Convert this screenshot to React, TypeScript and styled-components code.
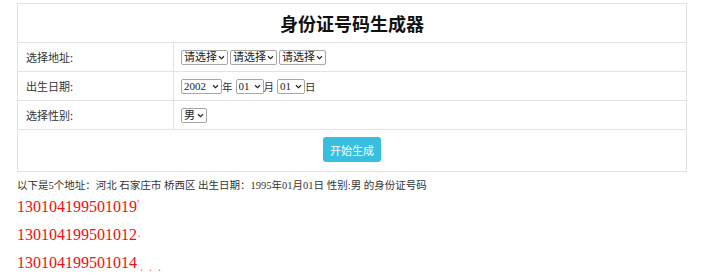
import styled, { createGlobalStyle } from 'styled-components';

const GlobalStyle = createGlobalStyle`
    html, body {
        margin: 0;
        padding: 0;
        background: #fff;
    }

    body {
        font-family: "Liberation Serif", "Noto Sans CJK SC", serif;
        color: #333;
    }
`;

const provinces = ['请选择'];
const years = ['2002'];
const days = ['01'];

const Chevron: React.FC = () => (
    <ChevronIcon viewBox="0 0 8 6" aria-hidden>
        <path d="M1 1.5 L4 4.5 L7 1.5" fill="none" stroke="#222" strokeWidth="1.4" />
    </ChevronIcon>
);

const Picker: React.FC<{ options: string[]; width: number }> = ({ options, width }) => (
    <PickerWrap $width={width}>
        <Select defaultValue={options[0]}>
            {options.map((o) => (
                <option key={o}>{o}</option>
            ))}
        </Select>
        <Chevron />
    </PickerWrap>
);

const App: React.FC = () => {
    return (
        <>
            <GlobalStyle />
            <Page>
                <FormTable>
                    <tbody>
                        <tr>
                            <TitleCell colSpan={2}>身份证号码生成器</TitleCell>
                        </tr>
                        <tr>
                            <LabelCell>选择地址:</LabelCell>
                            <FieldCell>
                                <Fields>
                                    <Picker options={provinces} width={47} />
                                    <Picker options={provinces} width={47} />
                                    <Picker options={provinces} width={47} />
                                </Fields>
                            </FieldCell>
                        </tr>
                        <tr>
                            <LabelCell>出生日期:</LabelCell>
                            <FieldCell>
                                <Fields>
                                    <Picker options={years} width={41} />
                                    <Unit>年</Unit>
                                    <Picker options={days} width={28} />
                                    <Unit>月</Unit>
                                    <Picker options={days} width={28} />
                                    <Unit>日</Unit>
                                </Fields>
                            </FieldCell>
                        </tr>
                        <tr>
                            <LabelCell>选择性别:</LabelCell>
                            <FieldCell>
                                <Fields>
                                    <Picker options={['男', '女']} width={26} />
                                </Fields>
                            </FieldCell>
                        </tr>
                        <tr>
                            <ActionCell colSpan={2}>
                                <GenerateButton type="button">开始生成</GenerateButton>
                            </ActionCell>
                        </tr>
                    </tbody>
                </FormTable>

                <Summary>
                    以下是5个地址：河北 石家庄市 桥西区 出生日期：1995年01月01日 性别:男 的身份证号码
                </Summary>

                <Results>
                    <IdLine>
                        130104199501019<Fragment $lift={-4}>ʹ</Fragment>
                    </IdLine>
                    <IdLine>
                        130104199501012<Fragment $lift={0}>·</Fragment>
                    </IdLine>
                    <IdLine>
                        130104199501014<Fragment $lift={3}>&nbsp;.&nbsp;&nbsp;.&nbsp;&nbsp;.</Fragment>
                    </IdLine>
                </Results>
            </Page>
        </>
    );
};

export default App;

const Page = styled.div`
    width: 670px;
    padding: 3px 0 0 17px;
`;

const FormTable = styled.table`
    width: 670px;
    border-collapse: collapse;
    border: 1px solid #dedede;
    font-size: 11px;
`;

const TitleCell = styled.td`
    height: 38px;
    padding: 0;
    border: 1px solid #e2e2e2;
    text-align: center;
    font-family: "Noto Sans CJK SC", sans-serif;
    font-size: 18px;
    font-weight: 700;
    color: #111;
`;

const LabelCell = styled.td`
    width: 147px;
    height: 28px;
    padding: 0 0 0 8px;
    border: 1px solid #e2e2e2;
    font-family: "Noto Sans CJK SC", sans-serif;
    color: #333;
`;

const FieldCell = styled.td`
    padding: 0 0 0 7px;
    border: 1px solid #e2e2e2;
`;

const Fields = styled.div`
    display: flex;
    align-items: center;
    gap: 2px;
`;

const PickerWrap = styled.span<{ $width: number }>`
    position: relative;
    display: inline-flex;
    width: ${({ $width }) => $width}px;
    height: 15px;
`;

const Select = styled.select`
    appearance: none;
    width: 100%;
    height: 100%;
    margin: 0;
    padding: 0 10px 0 2px;
    border: 1px solid #a6a6a6;
    border-radius: 2px;
    background: #fff;
    font-family: "Liberation Serif", "Noto Sans CJK SC", serif;
    font-size: 11px;
    line-height: 13px;
    color: #222;
`;

const ChevronIcon = styled.svg`
    position: absolute;
    right: 3px;
    top: 5px;
    width: 7px;
    height: 5px;
    pointer-events: none;
`;

const Unit = styled.span`
    margin: 0 1px 0 -2px;
    font-family: "Noto Sans CJK SC", sans-serif;
    font-size: 10.5px;
    color: #333;
`;

const ActionCell = styled.td`
    height: 41px;
    padding: 0;
    border: 1px solid #e2e2e2;
    text-align: center;
`;

const GenerateButton = styled.button`
    width: 58px;
    height: 25px;
    margin-top: -2px;
    padding: 0;
    border: none;
    border-radius: 3px;
    background: #38bfe0;
    color: #fff;
    font-family: "Noto Sans CJK SC", sans-serif;
    font-size: 11px;
    cursor: pointer;
`;

const Summary = styled.div`
    margin-top: 6px;
    font-family: "Liberation Serif", "Noto Sans CJK SC", serif;
    font-size: 10.5px;
    line-height: 16px;
    color: #333;
`;

const Results = styled.div`
    display: flex;
    flex-direction: column;
    gap: 9px;
    margin-top: 3px;
`;

const IdLine = styled.div`
    font-family: "Liberation Serif", serif;
    font-size: 16px;
    line-height: 19px;
    height: 19px;
    color: #f01010;
    white-space: nowrap;
`;

const Fragment = styled.span<{ $lift: number }>`
    position: relative;
    top: ${({ $lift }) => $lift}px;
    font-size: 12px;
    opacity: 0.7;
`;
